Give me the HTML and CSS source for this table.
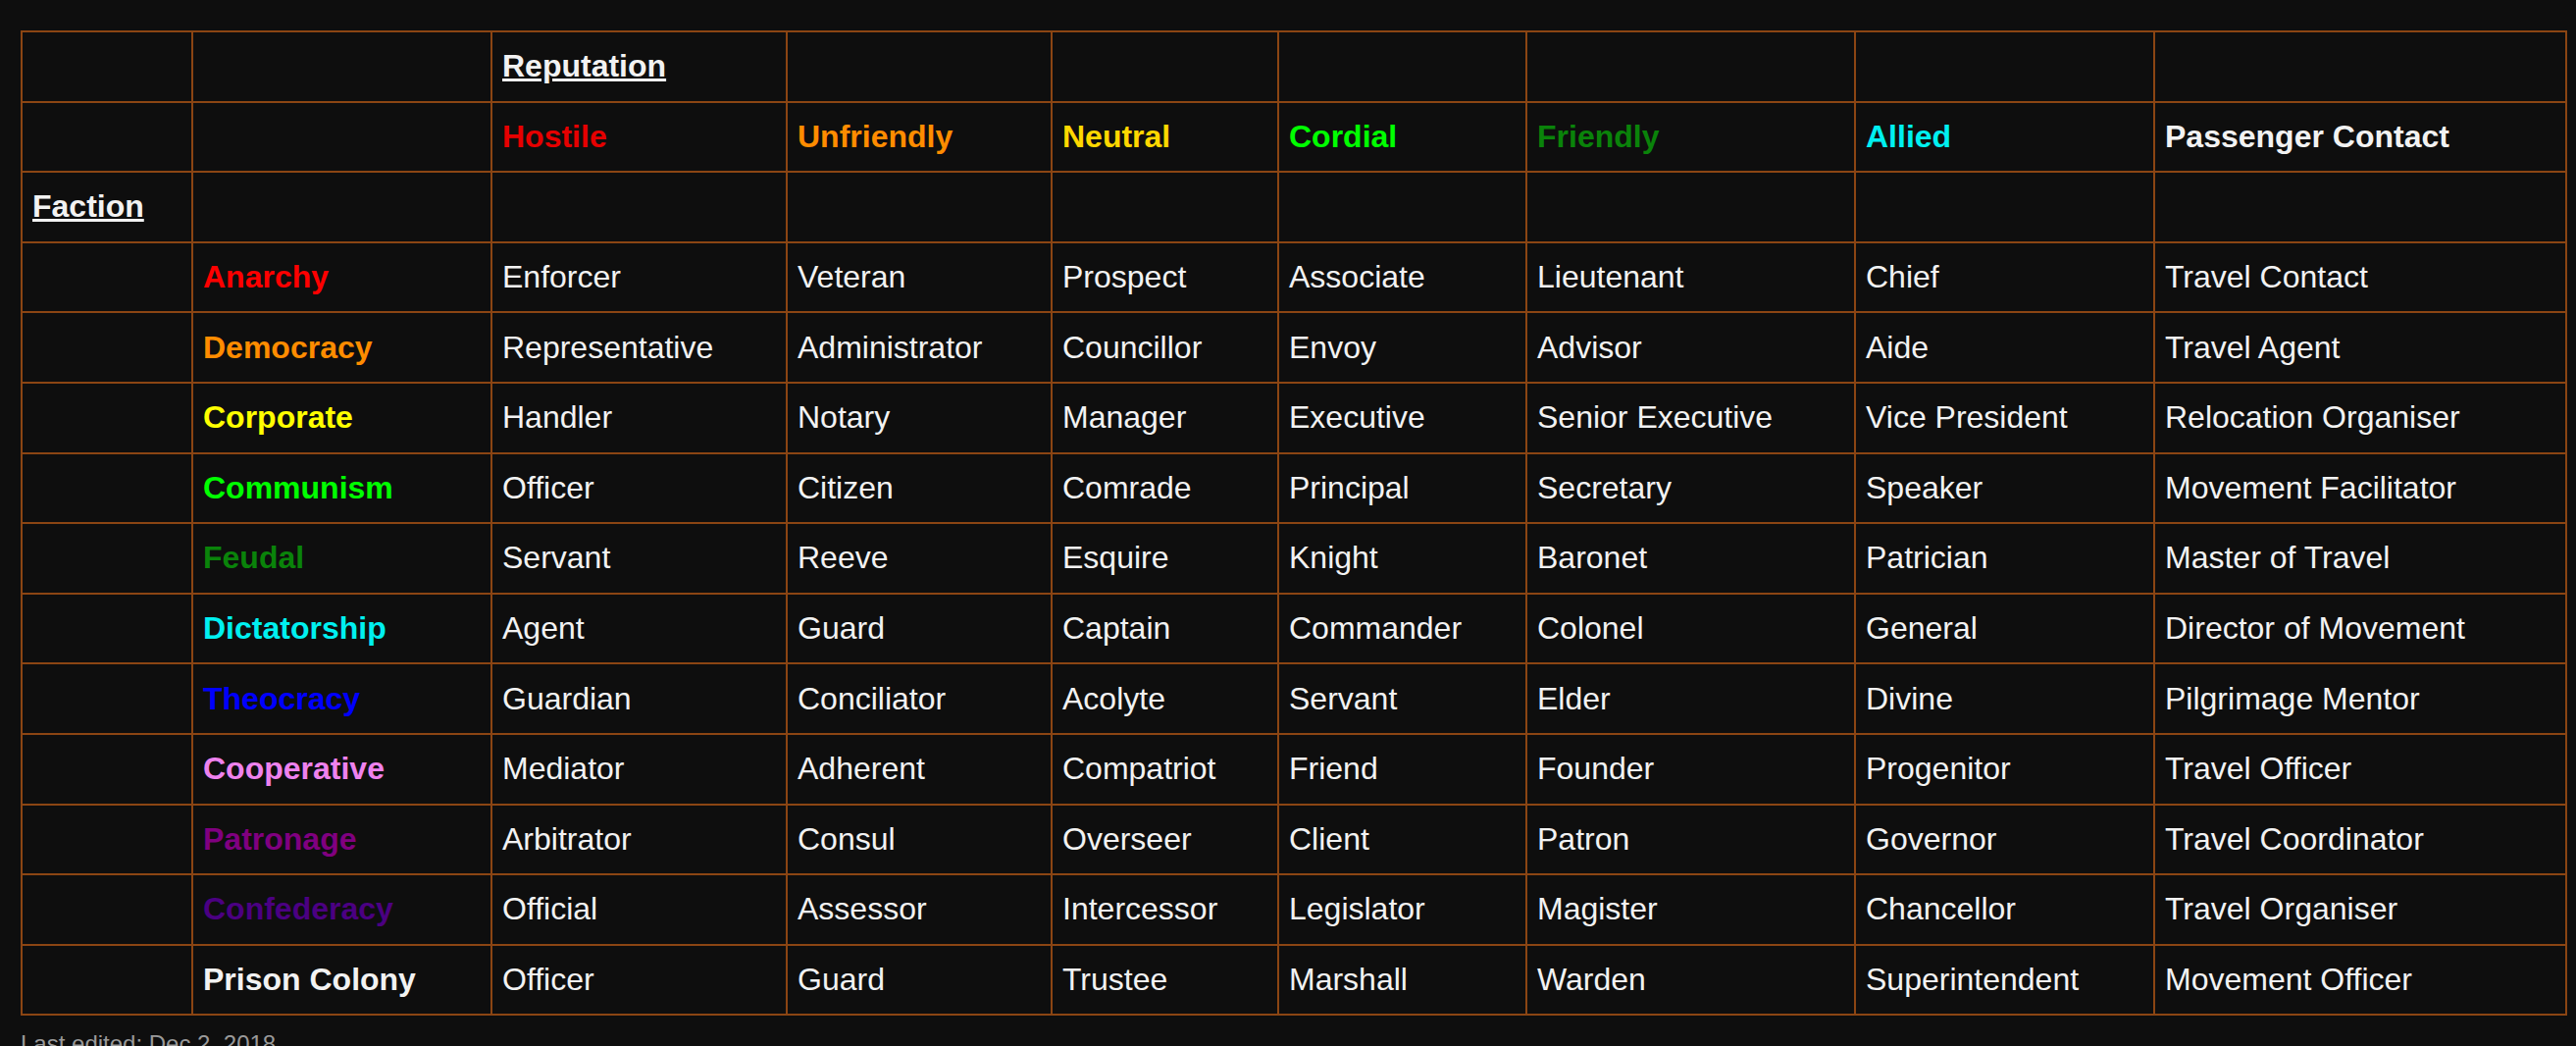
FILE: index.html
```html
<!DOCTYPE html>
<html lang="en">
<head>
<meta charset="utf-8">
<title>Faction Reputation Ranks</title>
<link rel="stylesheet" href="styles.css">
</head>
<body>
<main class="page">
  <table class="ranks">
    <colgroup>
      <col class="c-lead">
      <col class="c-faction">
      <col class="c-hostile">
      <col class="c-unfriendly">
      <col class="c-neutral">
      <col class="c-cordial">
      <col class="c-friendly">
      <col class="c-allied">
      <col class="c-passenger">
    </colgroup>
    <tbody>
      <tr>
        <td></td><td></td>
        <td class="head ul">Reputation</td>
        <td></td><td></td><td></td><td></td><td></td><td></td>
      </tr>
      <tr>
        <td></td><td></td>
        <td class="head red2">Hostile</td>
        <td class="head orange">Unfriendly</td>
        <td class="head gold">Neutral</td>
        <td class="head lime">Cordial</td>
        <td class="head green">Friendly</td>
        <td class="head cyan">Allied</td>
        <td class="head">Passenger Contact</td>
      </tr>
      <tr>
        <td class="head ul">Faction</td>
        <td></td><td></td><td></td><td></td><td></td><td></td><td></td><td></td>
      </tr>
      <tr><td></td><td class="head red">Anarchy</td><td>Enforcer</td><td>Veteran</td><td>Prospect</td><td>Associate</td><td>Lieutenant</td><td>Chief</td><td>Travel Contact</td></tr>
      <tr><td></td><td class="head orange">Democracy</td><td>Representative</td><td>Administrator</td><td>Councillor</td><td>Envoy</td><td>Advisor</td><td>Aide</td><td>Travel Agent</td></tr>
      <tr><td></td><td class="head yellow">Corporate</td><td>Handler</td><td>Notary</td><td>Manager</td><td>Executive</td><td>Senior Executive</td><td>Vice President</td><td>Relocation Organiser</td></tr>
      <tr><td></td><td class="head lime">Communism</td><td>Officer</td><td>Citizen</td><td>Comrade</td><td>Principal</td><td>Secretary</td><td>Speaker</td><td>Movement Facilitator</td></tr>
      <tr><td></td><td class="head green">Feudal</td><td>Servant</td><td>Reeve</td><td>Esquire</td><td>Knight</td><td>Baronet</td><td>Patrician</td><td>Master of Travel</td></tr>
      <tr><td></td><td class="head cyan">Dictatorship</td><td>Agent</td><td>Guard</td><td>Captain</td><td>Commander</td><td>Colonel</td><td>General</td><td>Director of Movement</td></tr>
      <tr><td></td><td class="head blue">Theocracy</td><td>Guardian</td><td>Conciliator</td><td>Acolyte</td><td>Servant</td><td>Elder</td><td>Divine</td><td>Pilgrimage Mentor</td></tr>
      <tr><td></td><td class="head violet">Cooperative</td><td>Mediator</td><td>Adherent</td><td>Compatriot</td><td>Friend</td><td>Founder</td><td>Progenitor</td><td>Travel Officer</td></tr>
      <tr><td></td><td class="head purple">Patronage</td><td>Arbitrator</td><td>Consul</td><td>Overseer</td><td>Client</td><td>Patron</td><td>Governor</td><td>Travel Coordinator</td></tr>
      <tr><td></td><td class="head indigo">Confederacy</td><td>Official</td><td>Assessor</td><td>Intercessor</td><td>Legislator</td><td>Magister</td><td>Chancellor</td><td>Travel Organiser</td></tr>
      <tr><td></td><td class="head">Prison Colony</td><td>Officer</td><td>Guard</td><td>Trustee</td><td>Marshall</td><td>Warden</td><td>Superintendent</td><td>Movement Officer</td></tr>
    </tbody>
  </table>
  <p class="edited">Last edited: Dec 2, 2018</p>
</main>
</body>
</html>
```

FILE: styles.css
```css
html, body {
  margin: 0;
  padding: 0;
  background: #0e0e0e;
}

body {
  font-family: "Liberation Sans", Arial, sans-serif;
  color: #f2f2f2;
}

.page {
  padding: 31px 11px 0 21px;
}

.ranks {
  width: 2594px;
  border-collapse: collapse;
  table-layout: fixed;
  border: 2px solid #8b4513;
  font-size: 32px;
}

.ranks td {
  border: 2px solid #8b4513;
  padding: 16.3px 10px;
  line-height: 37px;
  height: 37px;
  vertical-align: middle;
  white-space: nowrap;
  text-align: left;
}

.c-lead { width: 174px; }
.c-faction { width: 305px; }
.c-hostile { width: 301px; }
.c-unfriendly { width: 270px; }
.c-neutral { width: 231px; }
.c-cordial { width: 253px; }
.c-friendly { width: 335px; }
.c-allied { width: 305px; }
.c-passenger { width: 420px; }

.head { font-weight: bold; }
.ul { text-decoration: underline; }

.red { color: #ff0000; }
.red2 { color: #e60000; }
.orange { color: #ff8c00; }
.gold { color: #ffd700; }
.yellow { color: #ffff00; }
.lime { color: #00ff00; }
.green { color: #0a830a; }
.cyan { color: #00f0f0; }
.blue { color: #0000ff; }
.violet { color: #ee82ee; }
.purple { color: #800080; }
.indigo { color: #4b0082; }

.edited {
  margin: 15px 0 0 0;
  font-size: 24px;
  line-height: 28px;
  color: #9a9a9a;
}
```
